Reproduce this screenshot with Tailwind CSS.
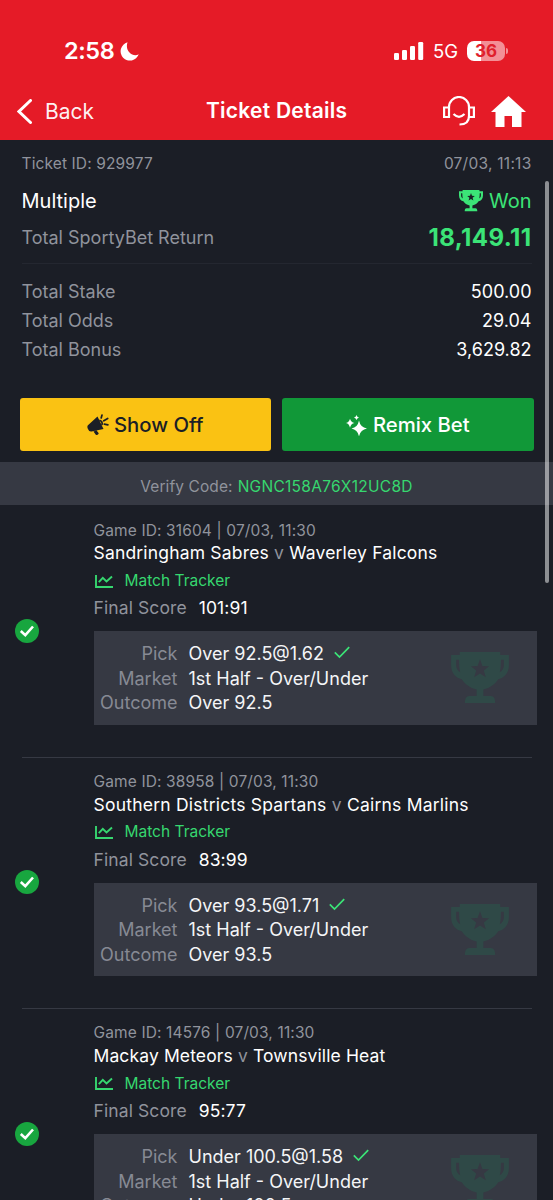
<!DOCTYPE html>
<html lang="en">
<head>
<meta charset="utf-8">
<title>Ticket Details</title>
<script src="https://cdn.jsdelivr.net/npm/@tailwindcss/browser@4"></script>
</head>
<body class="bg-[#1b1e26]">
<svg class="hidden">
  <symbol id="trophy" viewBox="0 0 24 22">
    <path fill="currentColor" fill-rule="evenodd" d="M3.600 0H20.400V1.200H24V5.500C24 8.800 22 10.800 19.600 11.300C18.200 13.400 16.300 14.800 13.400 15.600V18.300H16.500Q18.300 18.300 18.300 21.200H5.700Q5.700 18.300 7.500 18.300H10.600V15.600C7.700 14.800 5.800 13.400 4.400 11.300C2 10.800 0 8.800 0 5.500V1.200H3.600ZM3.300 3.200H2.100V5.500C2.100 6.800 2.700 7.800 3.800 8.400C3.400 7 3.300 5.300 3.300 3.200ZM20.700 3.200H21.900V5.500C21.900 6.800 21.300 7.800 20.200 8.400C20.600 7 20.700 5.300 20.700 3.200ZM12 3L11 5.800L8.200 5.900L10.400 7.700L9.600 10.500L12 8.900L14.400 10.500L13.600 7.700L15.800 5.900L13 5.800Z"/>
  </symbol>
  <symbol id="chart" viewBox="0 0 18 13">
    <path fill="none" stroke="currentColor" stroke-width="1.900" d="M1 0V12H18M3.800 7.200L7.800 2.800L11.500 6.500L17 1.500"/>
  </symbol>
  <symbol id="badge" viewBox="0 0 24 24">
    <circle cx="12" cy="12" r="12" fill="#18a63f"/>
    <path fill="none" stroke="#fff" stroke-width="2.600" d="M5.800 12L10.300 16.200L18 7.500"/>
  </symbol>
  <symbol id="tick" viewBox="0 0 16 13">
    <path fill="none" stroke="#3be477" stroke-width="1.700" d="M.8 6.300L5.500 11L15.200 1.200"/>
  </symbol>
</svg>
<div class="relative w-[553px] h-[1200px] overflow-hidden bg-[#1b1e26] font-['Inter',sans-serif] text-[#90939c] whitespace-nowrap">
  <header class="h-[140px] bg-[#e51b27] text-white">
    <div class="h-[82px] pt-[38px] pl-[64px] pr-[45px] flex items-start">
      <div class="h-[26px] flex items-center">
        <span class="w-[56px] text-[23.5px] font-semibold tracking-[-0.4px]">2:58</span>
        <svg class="w-[19px] h-[19px]" viewBox="0 0 19 19"><path fill="#fff" d="M7.500 .3A9.300 9.300 0 1 0 18.700 12.300C13 15.500 4.500 9.500 7.500 .3Z"/></svg>
      </div>
      <div class="h-[26px] ml-auto flex items-center">
        <svg class="w-[30px] h-[18px]" viewBox="0 0 30 18" fill="#fff"><rect x="0" y="11" width="5" height="7" rx="1.300"/><rect x="8" y="8" width="5" height="10" rx="1.300"/><rect x="16" y="4" width="5" height="14" rx="1.300"/><rect x="24.200" y="0" width="5" height="18" rx="1.300"/></svg>
        <span class="ml-[9px] w-[34px] pt-px text-[18.5px]">5G</span>
        <span class="w-[38px] h-5 rounded-[7px] bg-linear-to-r from-white from-36% to-[#f38f96] to-36% text-[#e0202c] text-[17px] leading-5 font-bold text-center">36</span>
        <span class="ml-px w-[2px] h-[6px] rounded-r-full bg-[#f38f96]"></span>
      </div>
    </div>
    <div class="h-[58px] pl-[17px] pr-[27px] flex items-center">
      <svg class="w-[15px] h-[25px]" viewBox="0 0 15 25"><path d="M13.500 1.500L2 12.500L13.500 23.500" fill="none" stroke="#fff" stroke-width="3" stroke-linecap="round"/></svg>
      <span class="ml-[13px] pt-px text-[21px] w-[161px] text-white/95">Back</span>
      <span class="text-[21px] font-semibold tracking-[0.25px]">Ticket Details</span>
      <svg class="ml-auto w-[32px] h-[30px]" viewBox="0 0 32 30" fill="none" stroke="#fff" stroke-width="2.200"><path d="M6 22V11A10 10 0 0 1 26 11V20Q26 28.500 16.500 28.500M10.500 18Q16 23.500 21.500 18"/><path d="M6 11.500H1.100V21H6M26 11.500H30.900V21H26"/></svg>
      <svg class="ml-[16px] w-[35px] h-[31px]" viewBox="0 0 35 31"><path fill="#fff" d="M17.500 0L35 16H30.500V31H21V20H13.500V31H4.500V16H0Z"/></svg>
    </div>
  </header>
  <section class="h-[322px] px-[21.5px]">
    <div class="h-[44px] pt-[3px] flex justify-between items-center text-[15.5px] tracking-[0.12px]"><span>Ticket ID: 929977</span><span class="tracking-[0.25px]">07/03, 11:13</span></div>
    <div class="h-[34px] flex justify-between items-center text-[20px]"><span class="text-white">Multiple</span><span class="flex items-center gap-[6px] text-[#3be477]"><svg class="w-[24px] h-[22px]"><use href="#trophy"/></svg>Won</span></div>
    <div class="h-[46px] pb-[5px] flex justify-between items-center text-[18px] border-b border-[#242730]"><span class="pb-[2px]">Total SportyBet Return</span><span class="text-[#3be477] text-[24px] font-bold tracking-[0.4px]">18,149.11</span></div>
    <div class="pt-[13px] text-[18px] leading-[29px]">
      <div class="flex justify-between"><span>Total Stake</span><span class="text-white">500.00</span></div>
      <div class="flex justify-between"><span>Total Odds</span><span class="text-white">29.04</span></div>
      <div class="flex justify-between"><span>Total Bonus</span><span class="text-white">3,629.82</span></div>
    </div>
    <div class="-mx-[2px] mt-[34px] grid grid-cols-2 gap-[11px] text-[20.3px]">
      <div class="h-[53px] pt-px rounded-[3px] bg-[#fac213] text-[#1b1e26] font-medium flex items-center justify-center gap-[5px]">
        <svg class="w-[22px] h-[22px]" viewBox="0 0 22 22"><path fill="currentColor" d="M10.500 2.500L16.500 15L4.500 17.500Q2 18 .7 14.500Q-.2 12 1.200 11Z M6.500 17.500L9.500 16.500L11.800 19.300Q10.800 22 8.800 20.700Z"/><path fill="none" stroke="currentColor" stroke-width="1.700" stroke-linecap="round" d="M14.200 4L15 1M16.800 6.800L20.700 4.500M17.300 10.200L20.900 10.900M13 6.500Q15.800 7.500 15 10.500"/></svg>
        <span>Show Off</span>
      </div>
      <div class="h-[53px] pt-px rounded-[3px] bg-[#119838] text-white font-medium flex items-center justify-center gap-[6px]">
        <svg class="w-[21px] h-[21px]" viewBox="0 0 21 21" fill="#fff"><path d="M13 5.500Q14.300 12.300 21 13.600Q14.300 14.900 13 21.500Q11.700 14.900 5.500 13.600Q11.700 12.300 13 5.500ZM4 3.700Q4.800 7.200 8.500 8Q4.800 8.800 4 12.700Q3.200 8.800 0 8Q3.200 7.200 4 3.700ZM10.500 0Q11 2 13 2.500Q11 3 10.500 5Q10 3 8 2.500Q10 2 10.500 0Z"/></svg>
        <span>Remix Bet</span>
      </div>
    </div>
  </section>
  <div class="h-[43px] pt-[6px] bg-[#363943] flex items-center justify-center gap-[5px] text-[15.5px]"><span class="tracking-[0.1px]">Verify Code:</span><span class="text-[#36d76f] tracking-[0.28px]">NGNC158A76X12UC8D</span></div>

  <article class="h-[251.5px] ml-[14.5px] flex items-center">
    <svg class="w-6 h-6 mr-[55px]"><use href="#badge"/></svg>
    <div class="w-[443.5px] h-full pt-[14px]">
      <div class="h-[22px] leading-[23px] text-[15.5px] tracking-[0.13px]">Game ID: 31604 | 07/03, 11:30</div>
      <div class="h-[24px] leading-[24px] text-[17.5px] tracking-[0.18px] text-white">Sandringham Sabres <span class="text-[#90939c]">v</span> Waverley Falcons</div>
      <div class="h-[31px] pt-px flex items-center gap-[12px] text-[15.5px] text-[#36d76f]"><svg class="ml-[1px] w-[18px] h-[13px]"><use href="#chart"/></svg><span>Match Tracker</span></div>
      <div class="h-[24px] leading-[24px] flex gap-[12px] text-[17.5px] tracking-[0.1px]"><span>Final Score</span><span class="text-white">101:91</span></div>
      <div class="mt-[11px] h-[93.5px] pt-[11px] bg-[#363943] flex text-[18px] leading-[24.5px]">
        <div class="w-[84px] text-right text-[#878a94]"><div>Pick</div><div>Market</div><div>Outcome</div></div>
        <div class="ml-[11px] text-[#f4f5f7]"><div class="flex items-center gap-[10px]"><span>Over 92.5@1.62</span><svg class="w-4 h-[13px] -mt-[3px]"><use href="#tick"/></svg></div><div>1st Half - Over/Under</div><div>Over 92.5</div></div>
        <svg class="ml-auto mr-[28px] mt-[10px] w-[58px] h-[53px] text-[#2f4947]"><use href="#trophy"/></svg>
      </div>
      <div class="-ml-[72px] w-[510px] mt-[32px] h-px bg-[#363943]"></div>
    </div>
  </article>
  <article class="h-[251.5px] ml-[14.5px] flex items-center">
    <svg class="w-6 h-6 mr-[55px]"><use href="#badge"/></svg>
    <div class="w-[443.5px] h-full pt-[14px]">
      <div class="h-[22px] leading-[22px] text-[15.5px] tracking-[0.13px]">Game ID: 38958 | 07/03, 11:30</div>
      <div class="h-[24px] leading-[23px] text-[17.5px] tracking-[0.22px] text-white">Southern Districts Spartans <span class="text-[#90939c]">v</span> Cairns Marlins</div>
      <div class="h-[31px] flex items-center gap-[12px] text-[15.5px] text-[#36d76f]"><svg class="ml-[1px] w-[18px] h-[13px]"><use href="#chart"/></svg><span>Match Tracker</span></div>
      <div class="h-[24px] leading-[24px] flex gap-[12px] text-[17.5px] tracking-[0.1px]"><span>Final Score</span><span class="text-white">83:99</span></div>
      <div class="mt-[11px] h-[93.5px] pt-[11px] bg-[#363943] flex text-[18px] leading-[24.5px]">
        <div class="w-[84px] text-right text-[#878a94]"><div>Pick</div><div>Market</div><div>Outcome</div></div>
        <div class="ml-[11px] text-[#f4f5f7]"><div class="flex items-center gap-[10px]"><span>Over 93.5@1.71</span><svg class="w-4 h-[13px] -mt-[3px]"><use href="#tick"/></svg></div><div>1st Half - Over/Under</div><div>Over 93.5</div></div>
        <svg class="ml-auto mr-[28px] mt-[10px] w-[58px] h-[53px] text-[#2f4947]"><use href="#trophy"/></svg>
      </div>
      <div class="-ml-[72px] w-[510px] mt-[32px] h-px bg-[#363943]"></div>
    </div>
  </article>
  <article class="h-[251.5px] ml-[14.5px] flex items-center">
    <svg class="w-6 h-6 mr-[55px]"><use href="#badge"/></svg>
    <div class="w-[443.5px] h-full pt-[14px]">
      <div class="h-[22px] leading-[22px] text-[15.5px] tracking-[0.13px]">Game ID: 14576 | 07/03, 11:30</div>
      <div class="h-[24px] leading-[24px] text-[17.5px] tracking-[0.12px] text-white">Mackay Meteors <span class="text-[#90939c]">v</span> Townsville Heat</div>
      <div class="h-[31px] flex items-center gap-[12px] text-[15.5px] text-[#36d76f]"><svg class="ml-[1px] w-[18px] h-[13px]"><use href="#chart"/></svg><span>Match Tracker</span></div>
      <div class="h-[24px] leading-[24px] flex gap-[12px] text-[17.5px] tracking-[0.1px]"><span>Final Score</span><span class="text-white">95:77</span></div>
      <div class="mt-[11px] h-[93.5px] pt-[11px] bg-[#363943] flex text-[18px] leading-[24.5px]">
        <div class="w-[84px] text-right text-[#878a94]"><div>Pick</div><div>Market</div><div>Outcome</div></div>
        <div class="ml-[11px] text-[#f4f5f7]"><div class="flex items-center gap-[10px]"><span>Under 100.5@1.58</span><svg class="w-4 h-[13px] -mt-[3px]"><use href="#tick"/></svg></div><div>1st Half - Over/Under</div><div>Under 100.5</div></div>
        <svg class="ml-auto mr-[28px] mt-[10px] w-[58px] h-[53px] text-[#2f4947]"><use href="#trophy"/></svg>
      </div>
    </div>
  </article>
  <div class="absolute left-[545px] top-[181px] w-[4px] h-[402px] rounded-full bg-white/50"></div>
</div>
</body>
</html>
